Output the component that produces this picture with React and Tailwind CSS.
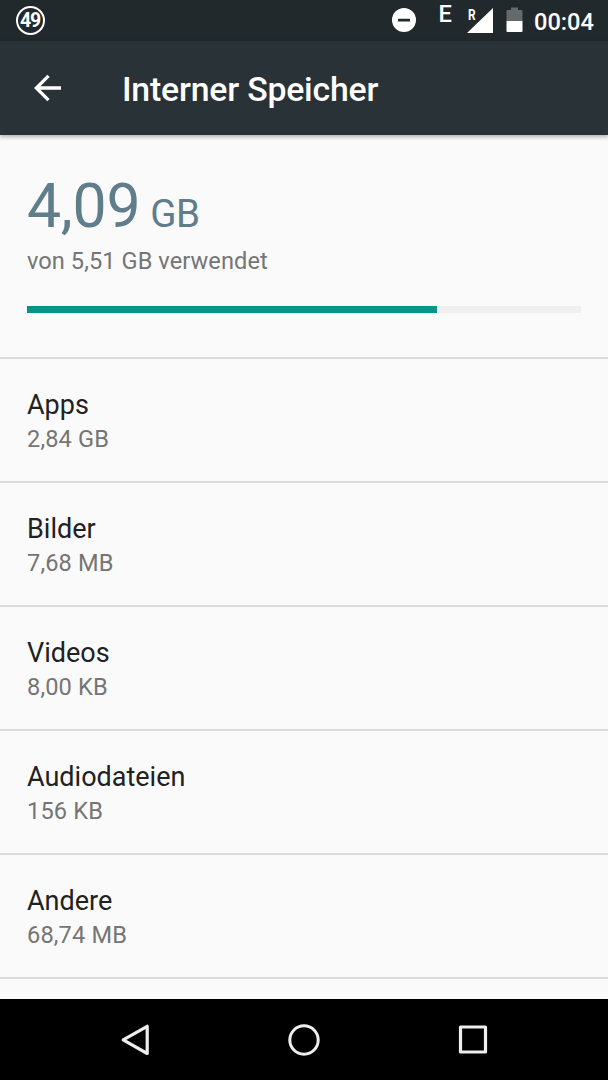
const CATEGORIES = [
  { name: "Apps", size: "2,84 GB" },
  { name: "Bilder", size: "7,68 MB" },
  { name: "Videos", size: "8,00 KB" },
  { name: "Audiodateien", size: "156 KB" },
  { name: "Andere", size: "68,74 MB" },
];

const USED = 4.08;
const TOTAL = 5.51;

function StatusBar() {
  return (
    <div className="flex h-[41px] shrink-0 items-start bg-[#22292c] pl-4 text-white">
      <div className="mt-1.5 flex h-[29px] w-[29px] items-center justify-center rounded-full border-2 border-white pr-px text-[19.5px] leading-none font-bold tracking-[-1.2px]">
        49
      </div>

      {/* do not disturb */}
      <svg width="24" height="24" viewBox="0 0 24 24" className="mt-2 ml-[347px]">
        <circle cx="12" cy="12" r="12" fill="#fff" />
        <rect x="6" y="10.7" width="12" height="2.8" rx="0.5" fill="#22292c" />
      </svg>

      <span className="mt-[3px] ml-[22.5px] w-[14px] text-[23.6px] leading-[23px] font-medium">E</span>

      {/* roaming signal */}
      <div className="relative ml-[14.5px] h-[41px] w-[26px]">
        <span className="absolute top-[8px] left-[0.5px] origin-left scale-x-85 text-[14px] leading-[14px] font-bold">R</span>
        <svg width="26" height="25" viewBox="0 0 26 25" className="absolute top-2 left-0">
          <path d="M26 0V25H0Z" fill="#fff" />
        </svg>
      </div>

      {/* battery */}
      <svg width="17" height="25" viewBox="0 0 17 25" className="mt-[7px] ml-[13px]">
        <path d="M5 0.5H12V3H15.5Q16.5 3 16.5 4V14H0.5V4Q0.5 3 1.5 3H5Z" fill="#64696b" />
        <path d="M0.5 14H16.5V24Q16.5 25 15.5 25H1.5Q0.5 25 0.5 24Z" fill="#fff" />
      </svg>

      <span className="mt-[8px] ml-[11px] text-[23.6px] leading-[28px] font-medium">00:04</span>
    </div>
  );
}

function AppBar() {
  return (
    <header className="z-10 flex h-[94px] shrink-0 items-center bg-[#283237] pl-[34px] text-white shadow-[0_2px_4px_rgba(0,0,0,0.3)]">
      <button type="button" aria-label="Zurück">
        <svg width="28" height="28" viewBox="0 0 28 28" fill="none" stroke="#fff" strokeWidth="3.3">
          <path d="M27 14H3M14.5 1.8L2.3 14L14.5 26.2" />
        </svg>
      </button>
      <h1 className="mt-1 ml-[60px] text-[33.8px] leading-10 font-medium tracking-[-0.2px]">Interner Speicher</h1>
    </header>
  );
}

function Summary() {
  return (
    <section className="h-[222px] shrink-0 px-[27px] pt-9">
      <div className="h-[72px] leading-[72px] whitespace-nowrap text-[#607d8b]">
        <span className="text-[60.8px] tracking-[-0.3px]">4,09</span>
        <span className="ml-[10px] text-[38.5px] tracking-[-0.4px]">GB</span>
      </div>
      <p className="mt-[3px] text-[23.6px] leading-[30px] tracking-[0.07px] text-[#757575]">von 5,51 GB verwendet</p>
      <div className="mt-[30px] h-[7px] bg-[#efefef]">
        <div className="h-full bg-[#009688]" style={{ width: `${(USED / TOTAL) * 100}%` }} />
      </div>
    </section>
  );
}

function NavBar() {
  return (
    <nav className="flex h-[81px] shrink-0 items-center bg-black pl-[120px]">
      <svg width="32" height="34" viewBox="0 0 32 34" fill="none" stroke="#eee" strokeWidth="3.2" strokeLinejoin="round">
        <path d="M27.2 3.3V30.5L3.2 16.9Z" />
      </svg>
      <svg width="34" height="34" viewBox="0 0 34 34" fill="none" stroke="#eee" strokeWidth="3" className="ml-[135px]">
        <circle cx="17" cy="17" r="14.2" />
      </svg>
      <svg width="30" height="30" viewBox="0 0 30 30" fill="none" stroke="#eee" strokeWidth="3.2" strokeLinejoin="round" className="ml-[137px]">
        <rect x="2.5" y="2" width="25" height="25" />
      </svg>
    </nav>
  );
}

export default function App() {
  return (
    <div className="flex h-[1080px] w-[608px] flex-col overflow-hidden bg-[#fafafa] font-['Roboto',sans-serif]">
      <StatusBar />
      <AppBar />
      <Summary />
      <ul className="min-h-0 flex-1 overflow-hidden">
        {CATEGORIES.map((c) => (
          <li key={c.name} className="h-[124px] border-t-2 border-[#dcdcdc] px-[27px] pt-[29px]">
            <div className="text-[27px] leading-[35px] text-[#212121]">{c.name}</div>
            <div className="text-[23.6px] leading-8 tracking-[0.15px] text-[#757575]">{c.size}</div>
          </li>
        ))}
        <li className="h-[124px] border-t-2 border-[#dcdcdc]" />
      </ul>
      <NavBar />
    </div>
  );
}
